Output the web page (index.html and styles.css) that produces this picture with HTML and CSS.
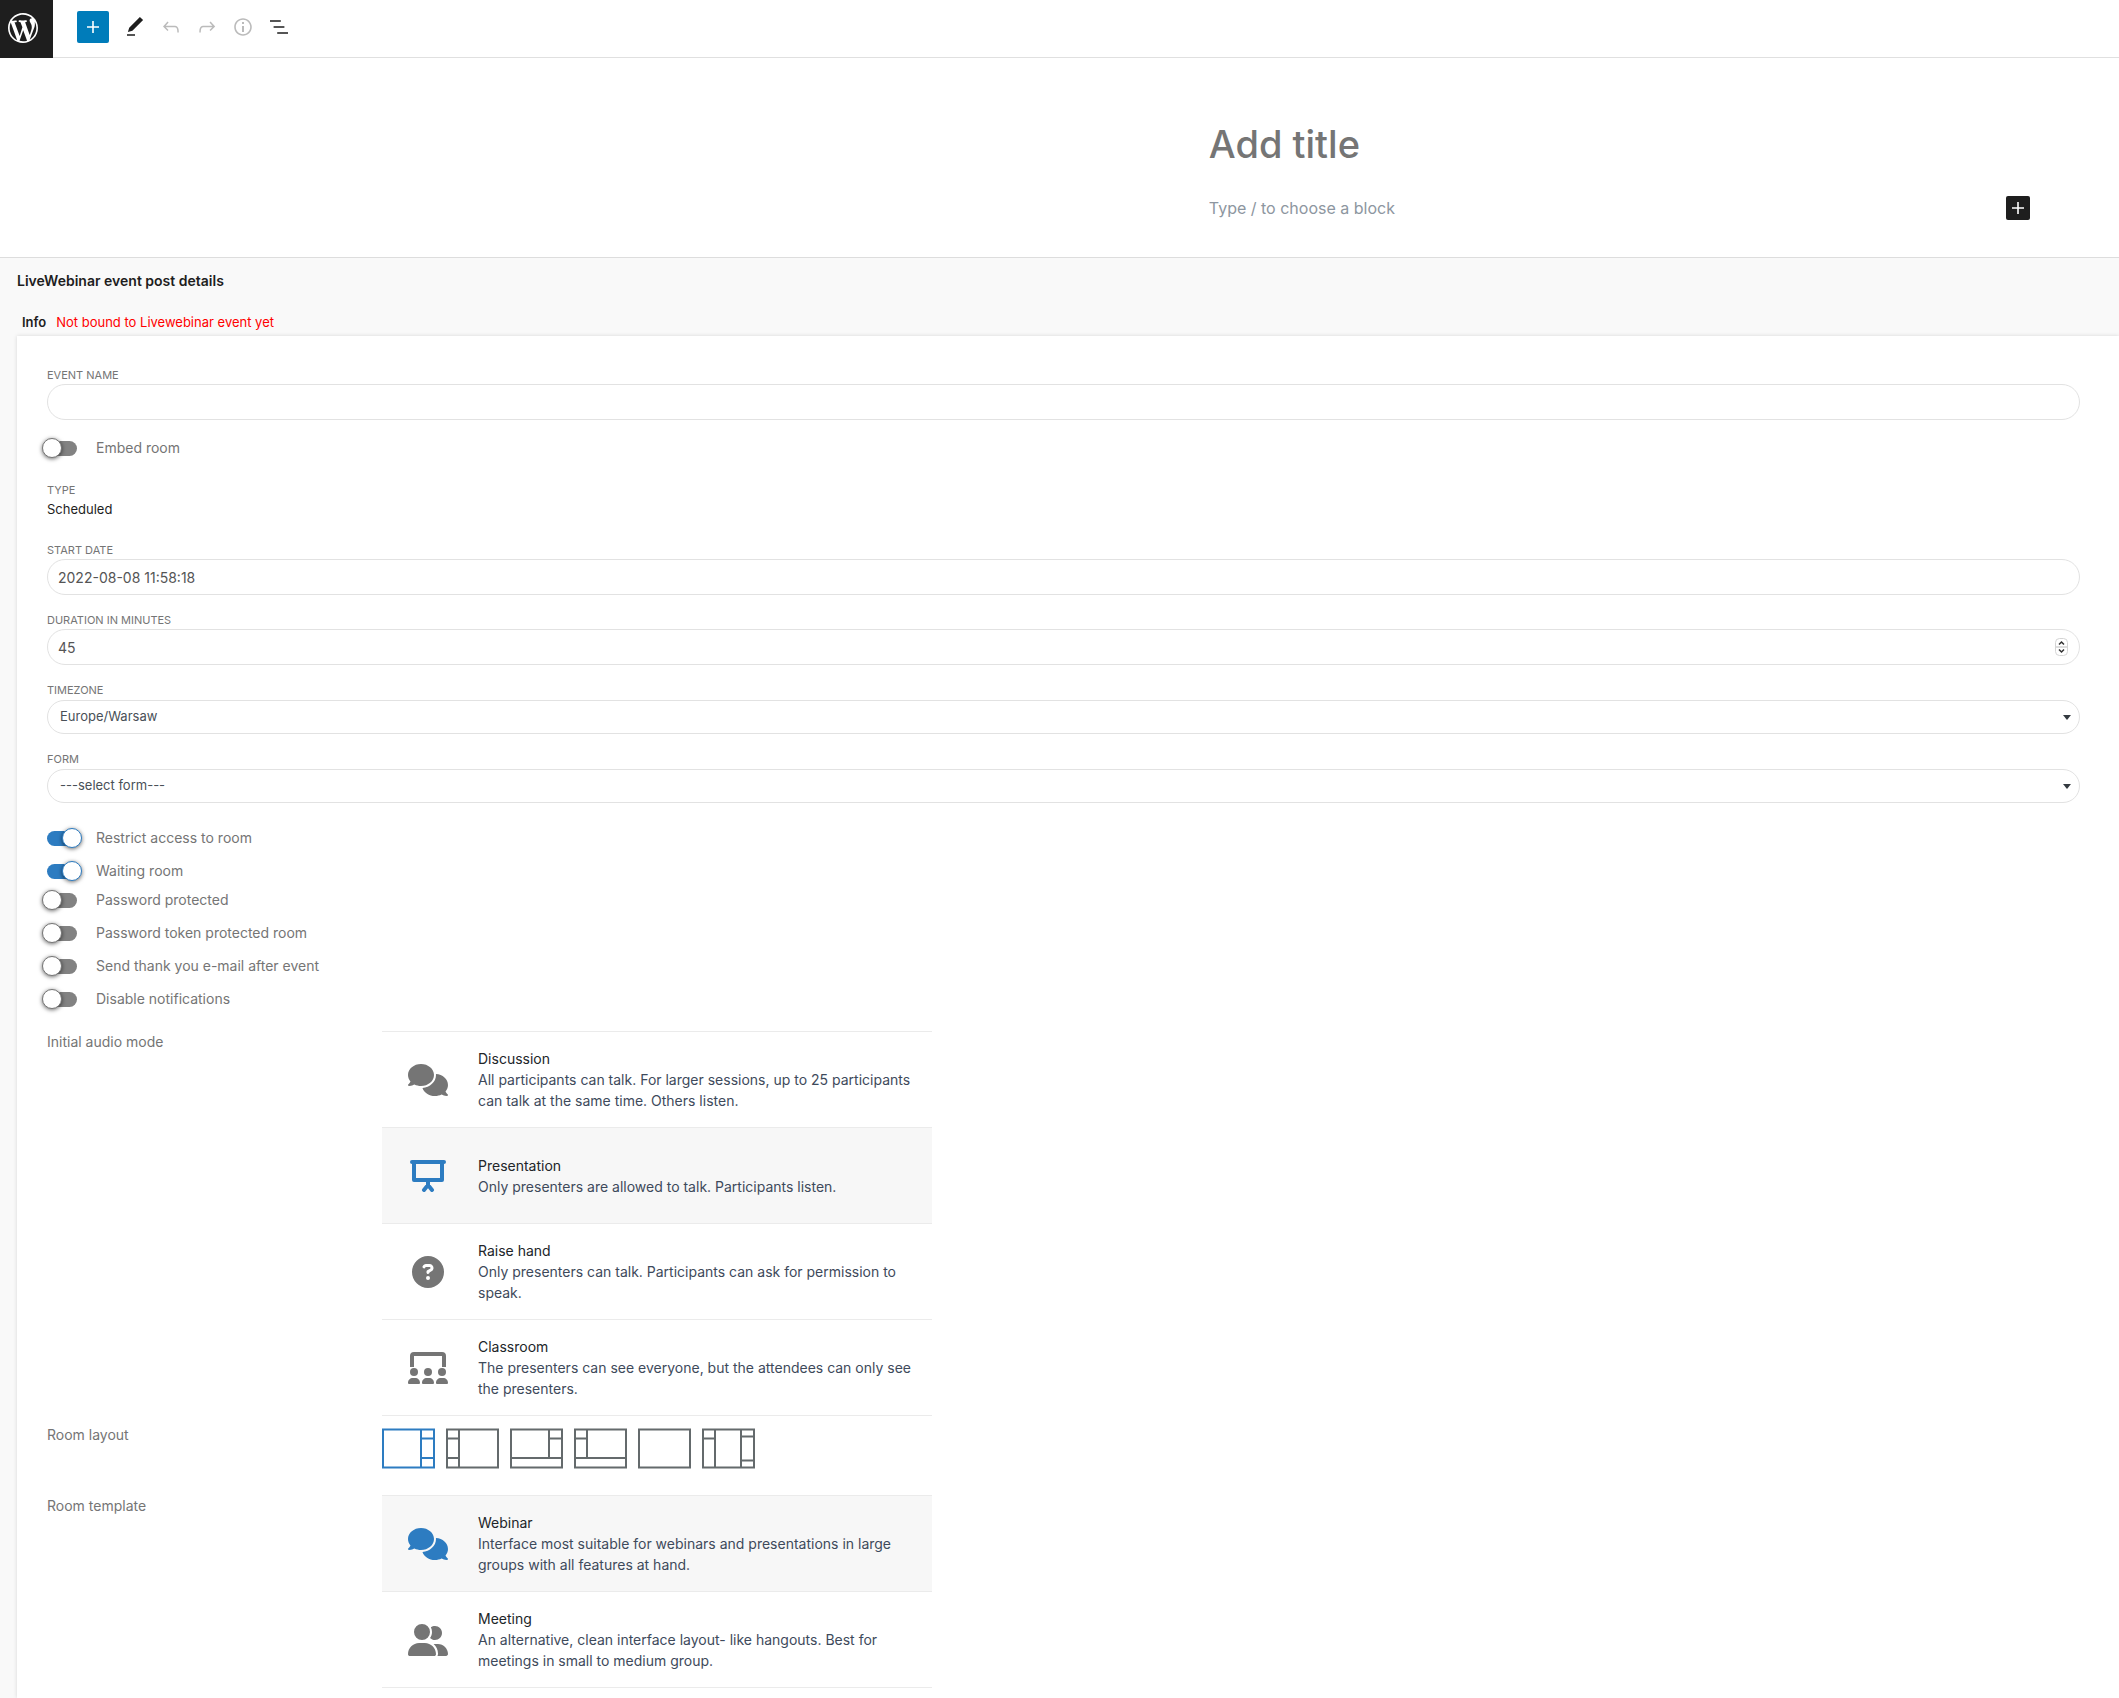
FILE: index.html
```html
<!DOCTYPE html>
<html lang="en">
<head>
    <meta charset="UTF-8">
    <meta name="viewport" content="width=device-width, initial-scale=1.0">
    <title>Add new event post</title>
    <link rel="stylesheet" href="styles.css">
</head>
<body>
    <!-- shared icons -->
    <svg class="sprite" aria-hidden="true">
        <symbol id="icon-comments" viewBox="0 0 640 512"><path d="M208 352c114.900 0 208-78.800 208-176S322.900 0 208 0S0 78.800 0 176c0 38.600 14.700 74.300 39.600 103.400c-3.500 9.400-8.700 17.700-14.200 24.700c-4.800 6.200-9.700 11-13.300 14.300c-1.800 1.600-3.300 2.900-4.300 3.700c-.5 .4-.9 .7-1.100 .8l-.2 .2C1 327.200-1.400 334.400 .8 340.900S9.100 352 16 352c21.800 0 43.800-5.600 62.100-12.500c9.200-3.500 17.800-7.400 25.200-11.400C134.100 343.300 169.800 352 208 352zM448 176c0 112.300-99.100 196.900-216.500 207C255.800 457.400 336.400 512 432 512c38.200 0 73.900-8.700 104.700-23.900c7.500 4 16 7.900 25.200 11.400c18.300 6.900 40.300 12.500 62.100 12.500c6.900 0 13.100-4.500 15.200-11.100c2.100-6.600-.2-13.800-5.800-17.900l-.2-.2c-.2-.2-.6-.4-1.100-.8c-1-.8-2.500-2-4.300-3.700c-3.600-3.300-8.500-8.100-13.300-14.300c-5.500-7-10.700-15.400-14.200-24.700c24.900-29 39.600-64.700 39.600-103.400c0-92.800-84.900-168.900-192.600-175.500c.4 5.100 .6 10.300 .6 15.500z"/></symbol>
    </svg>

    <header class="editor-header">
        <a class="wp-logo" href="#" aria-label="View posts">
            <svg width="36" height="36" viewBox="-2 -2 24 24"><path d="M20 10c0-5.510-4.490-10-10-10C4.480 0 0 4.490 0 10c0 5.520 4.480 10 10 10 5.510 0 10-4.480 10-10zM7.780 15.370L4.370 6.220c.55-.02 1.170-.08 1.170-.08.5-.06.44-1.130-.06-1.110 0 0-1.450.11-2.370.11-.18 0-.37 0-.58-.01C4.120 2.690 6.870 1.110 10 1.110c2.330 0 4.450.87 6.050 2.340-.68-.11-1.650.39-1.650 1.580 0 .74.45 1.360.9 2.100.35.61.55 1.360.55 2.460 0 1.490-1.400 5-1.400 5l-3.030-8.370c.54-.02.82-.17.82-.17.5-.05.44-1.250-.06-1.220 0 0-1.440.12-2.380.12-.87 0-2.330-.12-2.330-.12-.5-.03-.56 1.200-.06 1.220l.92.08 1.260 3.410zM17.410 10c.24-.64.74-1.870.43-4.250.7 1.290 1.050 2.710 1.050 4.250 0 3.290-1.730 6.240-4.400 7.780.97-2.590 1.940-5.200 2.920-7.780zM6.100 18.090C3.120 16.650 1.110 13.530 1.110 10c0-1.300.23-2.480.72-3.590C3.250 10.300 4.670 14.200 6.100 18.090zm4.030-6.630l2.580 6.980c-.86.29-1.760.45-2.710.45-.79 0-1.570-.11-2.290-.33.81-2.380 1.620-4.740 2.420-7.100z"/></svg>
        </a>
        <div class="toolbar">
            <button class="inserter" aria-label="Toggle block inserter">
                <svg width="24" height="24" viewBox="0 0 24 24"><path d="M18 11.200h-5.200V6h-1.600v5.200H6v1.600h5.200V18h1.600v-5.200H18z"/></svg>
            </button>
            <button class="tool" aria-label="Tools">
                <svg width="24" height="24" viewBox="0 0 24 24"><path d="M20.100 5.100L16.900 2 6.200 12.700l-1.300 4.400 4.500-1.300L20.100 5.100zM4 20.800h8v-1.500H4v1.500z"/></svg>
            </button>
            <button class="tool" aria-label="Undo" disabled>
                <svg width="24" height="24" viewBox="0 0 24 24"><path d="M18.300 11.700c-.6-.6-1.400-.9-2.300-.9H6.700l2.900-3.300-1.100-1-4.500 5L8.500 16l1-1-2.700-2.700H16c.5 0 .9.2 1.300.5 1 1 1 3.400 1 4.500v.3h1.500v-.2c0-1.500 0-4.300-1.500-5.700z"/></svg>
            </button>
            <button class="tool" aria-label="Redo" disabled>
                <svg width="24" height="24" viewBox="0 0 24 24"><path d="M15.600 6.500l-1.100 1 2.900 3.300H8c-.9 0-1.700.3-2.300.9-1.400 1.500-1.400 4.200-1.400 5.600v.2h1.500v-.3c0-1.100 0-3.500 1-4.500.3-.3.7-.5 1.300-.5h9.200L14.500 15l1.100 1.100 4.600-4.600-4.600-5z"/></svg>
            </button>
            <button class="tool" aria-label="Details" disabled>
                <svg width="24" height="24" viewBox="0 0 24 24"><path d="M12 3.200c-4.800 0-8.800 3.900-8.800 8.800 0 4.800 3.900 8.800 8.800 8.800 4.800 0 8.800-3.900 8.800-8.800 0-4.800-4-8.800-8.800-8.800zm0 16c-4 0-7.200-3.300-7.200-7.200C4.800 8 8 4.800 12 4.800s7.200 3.300 7.200 7.200c0 4-3.200 7.200-7.200 7.200zM11 17h2v-6h-2v6zm0-8h2V7h-2v2z"/></svg>
            </button>
            <button class="tool" aria-label="List view">
                <svg width="24" height="24" viewBox="0 0 24 24"><path d="M13.800 5.200H3v1.500h10.800V5.200zm-3.600 12v1.500H21v-1.500H10.200zm7.200-6H6.600v1.500h10.800v-1.500z"/></svg>
            </button>
        </div>
    </header>

    <section class="editor">
        <input class="post-title" type="text" placeholder="Add title" aria-label="Add title">
        <div class="block-row">
            <input class="block-input" type="text" placeholder="Type / to choose a block" aria-label="Block">
            <button class="add-block" aria-label="Add block">
                <svg width="24" height="24" viewBox="0 0 24 24"><path d="M18 11.200h-5.200V6h-1.600v5.200H6v1.600h5.200V18h1.600v-5.200H18z"/></svg>
            </button>
        </div>
    </section>

    <main class="metabox">
        <h2 class="metabox-title">LiveWebinar event post details</h2>
        <div class="info"><strong>Info</strong><span class="info-error">Not bound to Livewebinar event yet</span></div>

        <form class="card">
            <div class="field">
                <label class="field-label" for="event-name">Event name</label>
                <input class="text-input" type="text" id="event-name">
            </div>

            <label class="switch switch-embed"><input type="checkbox">Embed room</label>

            <div class="type">
                <div class="field-label">Type</div>
                <div class="type-value">Scheduled</div>
            </div>

            <div class="field">
                <label class="field-label" for="start-date">Start date</label>
                <input class="text-input" type="text" id="start-date" value="2022-08-08 11:58:18">
            </div>
            <div class="field">
                <label class="field-label" for="duration">Duration in minutes</label>
                <div class="number">
                    <input class="text-input" type="number" id="duration" value="45">
                    <svg class="spinner" width="13" height="18" viewBox="0 0 13 18"><rect x=".5" y=".5" width="12" height="17" rx="4" fill="#fff" stroke="#d4d4d4"/><path d="M1 9h11" stroke="#ddd" stroke-width="2"/><path d="M4 6.500l2.500-2.500L9 6.500M4 11.500L6.500 14 9 11.500" fill="none" stroke="#333" stroke-width="1.500"/></svg>
                </div>
            </div>
            <div class="field">
                <label class="field-label" for="timezone">Timezone</label>
                <div class="select">
                    <select id="timezone"><option>Europe/Warsaw</option></select>
                </div>
            </div>
            <div class="field">
                <label class="field-label" for="form">Form</label>
                <div class="select">
                    <select id="form"><option>---select form---</option></select>
                </div>
            </div>

            <div class="switches">
                <div class="switch-group">
                    <label class="switch"><input type="checkbox" checked>Restrict access to room</label>
                    <label class="switch"><input type="checkbox" checked>Waiting room</label>
                </div>
                <div class="switch-group">
                    <label class="switch"><input type="checkbox">Password protected</label>
                    <label class="switch"><input type="checkbox">Password token protected room</label>
                    <label class="switch"><input type="checkbox">Send thank you e-mail after event</label>
                    <label class="switch"><input type="checkbox">Disable notifications</label>
                </div>
            </div>

            <div class="setting" role="group" aria-labelledby="audio-label">
                <div class="setting-label" id="audio-label">Initial audio mode</div>
                <div class="options">
                    <label class="option">
                        <input type="radio" name="audio">
                        <svg class="option-icon" width="40" height="32"><use href="#icon-comments"/></svg>
                        <span class="option-text"><span class="option-name">Discussion</span>All participants can talk. For larger sessions, up to 25 participants can talk at the same time. Others listen.</span>
                    </label>
                    <label class="option">
                        <input type="radio" name="audio" checked>
                        <svg class="option-icon" width="40" height="32" viewBox="0 0 40 32"><g fill="none" stroke="currentColor" stroke-width="4" stroke-linecap="round" stroke-linejoin="round"><path d="M4 2h32M6 2v18h28V2"/><path d="M20 20v5M16 30l4-5 4 5"/></g></svg>
                        <span class="option-text"><span class="option-name">Presentation</span>Only presenters are allowed to talk. Participants listen.</span>
                    </label>
                    <label class="option">
                        <input type="radio" name="audio">
                        <svg class="option-icon" width="40" height="32" viewBox="0 0 512 512"><path d="M256 512A256 256 0 1 0 256 0a256 256 0 1 0 0 512zM169.800 165.300c7.900-22.300 29.100-37.300 52.800-37.300h58.300c34.900 0 63.100 28.300 63.100 63.100c0 22.600-12.100 43.500-31.700 54.800L280 264.400c-.2 13-10.900 23.600-24 23.600c-13.300 0-24-10.700-24-24V250.500c0-8.600 4.600-16.500 12.100-20.800l44.300-25.400c4.700-2.700 7.600-7.700 7.600-13.100c0-8.400-6.800-15.100-15.100-15.100H222.600c-3.400 0-6.400 2.100-7.500 5.300l-.4 1.200c-4.400 12.500-18.200 19-30.600 14.600s-19-18.200-14.600-30.600l.4-1.200zM224 352a32 32 0 1 1 64 0 32 32 0 1 1 -64 0z"/></svg>
                        <span class="option-text"><span class="option-name">Raise hand</span>Only presenters can talk. Participants can ask for permission to speak.</span>
                    </label>
                    <label class="option">
                        <input type="radio" name="audio">
                        <svg class="option-icon" width="40" height="32" viewBox="0 0 40 32"><path d="M4 15V4q0-2 2-2h28q2 0 2 2v11" fill="none" stroke="currentColor" stroke-width="4"/><circle cx="6" cy="20" r="5" fill="#fff"/><circle cx="34" cy="20" r="5" fill="#fff"/><circle cx="6" cy="20" r="4"/><circle cx="20" cy="20" r="4"/><circle cx="34" cy="20" r="4"/><path d="M0 31c0-3 2-5 5-5h2c3 0 5 2 5 5q0 1-1 1H1q-1 0-1-1zM14 31c0-3 2-5 5-5h2c3 0 5 2 5 5q0 1-1 1H15q-1 0-1-1zM28 31c0-3 2-5 5-5h2c3 0 5 2 5 5q0 1-1 1H29q-1 0-1-1z"/></svg>
                        <span class="option-text"><span class="option-name">Classroom</span>The presenters can see everyone, but the attendees can only see the presenters.</span>
                    </label>
                </div>
            </div>

            <div class="setting" role="group" aria-labelledby="layout-label">
                <div class="setting-label" id="layout-label">Room layout</div>
                <div class="layouts">
                    <label class="layout"><input type="radio" name="layout" aria-label="Side panel right" checked><svg width="53" height="41" viewBox="0 0 53 41"><path d="M1 1.500h51v38H1zM39 1v39M39 10.500h13M39 30h13"/></svg></label>
                    <label class="layout"><input type="radio" name="layout" aria-label="Side panel left"><svg width="53" height="41" viewBox="0 0 53 41"><path d="M1 1.500h51v38H1zM13 1v39M1 10.500h12M1 30h12"/></svg></label>
                    <label class="layout"><input type="radio" name="layout" aria-label="Right panel with bottom bar"><svg width="53" height="41" viewBox="0 0 53 41"><path d="M1 1.500h51v38H1zM39 1v29M39 10.500h13M1 30h51"/></svg></label>
                    <label class="layout"><input type="radio" name="layout" aria-label="Left panel with bottom bar"><svg width="53" height="41" viewBox="0 0 53 41"><path d="M1 1.500h51v38H1zM13 1v29M1 10.500h12M1 30h51"/></svg></label>
                    <label class="layout"><input type="radio" name="layout" aria-label="Full room"><svg width="53" height="41" viewBox="0 0 53 41"><path d="M1 1.500h51v38H1z"/></svg></label>
                    <label class="layout"><input type="radio" name="layout" aria-label="Panels on both sides"><svg width="53" height="41" viewBox="0 0 53 41"><path d="M1 1.500h51v38H1zM13 1v39M1 10.500h12M39 1v39M39 8.500h13M39 32.500h13"/></svg></label>
                </div>
            </div>

            <div class="setting" role="group" aria-labelledby="template-label">
                <div class="setting-label" id="template-label">Room template</div>
                <div class="options">
                    <label class="option">
                        <input type="radio" name="template" checked>
                        <svg class="option-icon" width="40" height="32"><use href="#icon-comments"/></svg>
                        <span class="option-text"><span class="option-name">Webinar</span>Interface most suitable for webinars and presentations in large groups with all features at hand.</span>
                    </label>
                    <label class="option">
                        <input type="radio" name="template">
                        <svg class="option-icon" width="40" height="32" viewBox="0 0 640 512"><path d="M96 128a128 128 0 1 1 256 0A128 128 0 1 1 96 128zM0 482.300C0 383.800 79.800 304 178.300 304h91.400C368.200 304 448 383.800 448 482.300c0 16.400-13.300 29.700-29.700 29.700H29.700C13.300 512 0 498.700 0 482.300zM609.300 512H471.400c5.400-9.400 8.600-20.300 8.600-32v-8c0-60.700-27.100-115.200-69.800-151.800c2.400-.1 4.700-.2 7.100-.2h61.400C567.800 320 640 392.200 640 481.300c0 17-13.800 30.700-30.700 30.700zM432 256c-31 0-59-12.600-79.300-32.900C372.400 196.500 384 163.600 384 128c0-26.800-6.600-52.100-18.300-74.300C384.300 40.100 407.200 32 432 32c61.900 0 112 50.100 112 112s-50.100 112-112 112z"/></svg>
                        <span class="option-text"><span class="option-name">Meeting</span>An alternative, clean interface layout- like hangouts. Best for meetings in small to medium group.</span>
                    </label>
                </div>
            </div>
        </form>
    </main>
</body>
</html>
```

FILE: styles.css
```css
* {
    box-sizing: border-box;
}
body {
    margin: 0;
    background-color: #fff;
    color: #1e1e1e;
    font-family: Inter, "Liberation Sans", sans-serif;
    font-size: 14px;
    line-height: 21px;
}
button {
    display: flex;
    align-items: center;
    justify-content: center;
    padding: 0;
    border: none;
    background-color: transparent;
    cursor: pointer;
}
svg {
    display: block;
    fill: currentColor;
}
input, select {
    font-family: inherit;
}
.sprite {
    position: absolute;
    width: 0;
    height: 0;
}

/* Top bar */
.editor-header {
    display: flex;
    height: 58px;
    border-bottom: 1px solid #e0e0e0;
}
.wp-logo {
    display: flex;
    align-items: center;
    justify-content: center;
    width: 53px;
    height: 58px;
    padding-right: 7px;
    padding-bottom: 2px;
    background-color: #1e1e1e;
    color: #fff;
}
.toolbar {
    display: flex;
    align-items: center;
    padding: 0 24px 3px;
}
.inserter {
    width: 32px;
    height: 32px;
    margin-right: 8px;
    border-radius: 2px;
    background-color: #007cba;
    color: #fff;
}
.tool {
    width: 36px;
    height: 36px;
    color: #1e1e1e;
}
.tool:disabled {
    color: #bbb;
}

/* Post title and first block */
.editor {
    padding: 59px 89px 37px 57%;
}
.post-title, .block-input {
    width: 100%;
    padding: 0 1px;
    border: none;
    outline: none;
    background-color: transparent;
}
.post-title {
    display: block;
    height: 54px;
    margin-bottom: 25px;
    font-size: 38px;
    font-weight: 500;
}
.post-title::placeholder {
    color: #757575;
}
.block-row {
    display: flex;
    align-items: center;
}
.block-input {
    font-size: 16px;
}
.block-input::placeholder {
    color: #8d96a0;
}
.add-block {
    flex: none;
    width: 24px;
    height: 24px;
    border-radius: 2px;
    background-color: #1e1e1e;
    color: #fff;
}

/* Event details */
.metabox {
    padding: 12px 0 0 17px;
    border-top: 1px solid #ddd;
    background-color: #f9f9f9;
}
.metabox-title {
    margin: 0 0 21px;
    font-size: 14px;
    font-weight: 600;
    line-height: 21px;
}
.info {
    display: flex;
    gap: 10px;
    padding: 0 5px;
    margin-bottom: 3px;
    font-size: 13px;
}
.info strong {
    font-weight: 600;
}
.info-error {
    color: #f00;
}
.card {
    padding: 30px 39px 10px 30px;
    background-color: #fff;
    box-shadow: 0 0 4px rgba(0, 0, 0, 0.14);
    color: #757575;
}
.field + .field {
    margin-top: 16px;
}
.field-label {
    display: block;
    font-size: 11px;
    line-height: 18px;
    text-transform: uppercase;
}
.text-input, .select select {
    display: block;
    width: 100%;
    border: 1px solid #e2e2e2;
    border-radius: 18px;
    background-color: #fff;
    appearance: none;
}
.text-input {
    height: 36px;
    padding: 0 10px;
    color: #555;
    font-size: 14px;
}
.number, .select {
    position: relative;
}
.number .text-input {
    appearance: textfield;
}
.spinner {
    position: absolute;
    top: 9px;
    right: 12px;
}
.select {
    padding-top: 1px;
}
.select select {
    height: 34px;
    padding: 0 12px 2px;
    color: #495057;
    font-size: 13px;
}
.select::after {
    content: "";
    position: absolute;
    top: 16px;
    right: 9px;
    border: 4px solid transparent;
    border-top: 5px solid #343a40;
    border-bottom: none;
}
.type {
    margin: 17px 0 22px;
}
.type-value {
    color: #1e1e1e;
    font-size: 13px;
    line-height: 20px;
}

/* Switches */
.switches {
    margin: 20px 0 18px;
}
.switch-group {
    display: flex;
    flex-direction: column;
    align-items: flex-start;
    gap: 4px;
}
.switch {
    display: flex;
    align-items: center;
    gap: 19px;
    min-height: 29px;
}
.switch-embed {
    min-height: 33px;
    margin-top: 11px;
}
.switch input {
    position: relative;
    width: 30px;
    height: 15px;
    margin: 2px 0 0;
    border-radius: 8px;
    background-color: #828282;
    appearance: none;
}
.switch input::before {
    content: "";
    position: absolute;
    top: -3px;
    left: -5px;
    width: 18px;
    height: 18px;
    border: 1px solid #757575;
    border-radius: 50%;
    background-color: #fff;
    box-shadow: 0 1px 4px rgba(0, 0, 0, 0.6);
}
.switch input:checked {
    background-color: #2d7cc1;
}
.switch input:checked::before {
    left: 15px;
    border-color: #2d7cc1;
}

/* Settings with pictures */
.setting {
    display: grid;
    grid-template-columns: 335px minmax(0, 550px);
}
.option input, .layout input {
    position: absolute;
    margin: 0;
    opacity: 0;
}
.options {
    border-top: 1px solid #ebebeb;
}
.option {
    display: flex;
    align-items: center;
    gap: 30px;
    min-height: 96px;
    padding: 0 10px 0 26px;
    border-bottom: 1px solid #ebebeb;
}
.option:has(input:checked) {
    background-color: #f7f7f7;
}
.option:has(input:checked) .option-icon {
    color: #2d7cc1;
}
.option-icon {
    flex: none;
}
.option-text {
    color: #3e4a5b;
}
.option-name {
    display: block;
    color: #212529;
}
.setting:has(.layouts) {
    margin-top: 8px;
}
.layouts {
    display: flex;
    gap: 11px;
    padding: 4px 0 26px;
}
.layout {
    color: #646a6c;
}
.layout:has(input:checked) {
    color: #2d7cc1;
}
.layout svg {
    fill: none;
    stroke: currentColor;
    stroke-width: 2;
}
```
